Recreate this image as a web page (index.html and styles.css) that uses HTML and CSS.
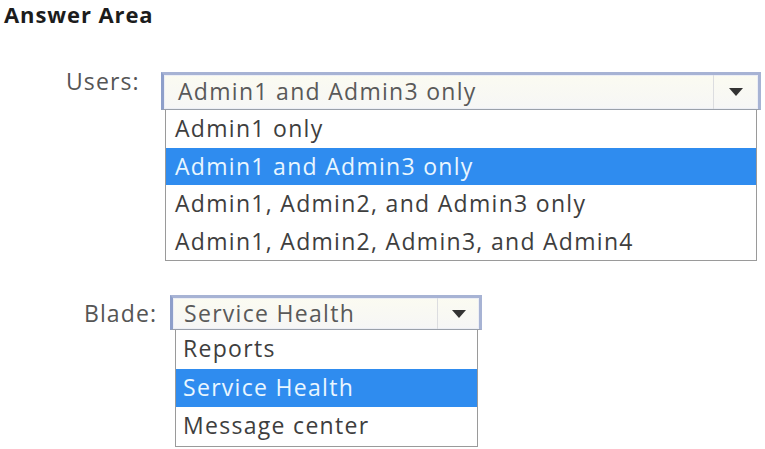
FILE: index.html
```html
<!DOCTYPE html>
<html>
<head>
<meta charset="utf-8">
<link rel="stylesheet" href="styles.css">
</head>
<body>
<div class="page">
  <h1 class="title">Answer Area</h1>
  <div class="row row-users">
    <div class="label">Users:</div>
    <div class="combo combo-users">
      <div class="current">
        <span class="value">Admin1 and Admin3 only</span>
        <span class="btn"><span class="arrow"></span></span>
      </div>
      <ul class="list">
        <li>Admin1 only</li>
        <li class="sel">Admin1 and Admin3 only</li>
        <li>Admin1, Admin2, and Admin3 only</li>
        <li>Admin1, Admin2, Admin3, and Admin4</li>
      </ul>
    </div>
  </div>
  <div class="row row-blade">
    <div class="label">Blade:</div>
    <div class="combo combo-blade">
      <div class="current">
        <span class="value">Service Health</span>
        <span class="btn"><span class="arrow"></span></span>
      </div>
      <ul class="list">
        <li>Reports</li>
        <li class="sel">Service Health</li>
        <li>Message center</li>
      </ul>
    </div>
  </div>
</div>
</body>
</html>
```

FILE: styles.css
```css
* { box-sizing: border-box; }
html, body { margin: 0; padding: 0; background: #fff; }
body {
  font-family: "Open Sans", "Noto Sans", sans-serif;
  color: #454545;
  width: 765px;
  height: 449px;
  overflow: hidden;
}
.page { padding: 0; }
.title {
  margin: 0;
  padding: 0 0 0 4px;
  height: 28px;
  line-height: 28px;
  font-size: 22px;
  font-weight: 700;
  letter-spacing: 0.9px;
  color: #1c1c1c;
}
.row { display: flex; align-items: flex-start; }
.label {
  font-size: 23px;
  letter-spacing: 1.1px;
  line-height: 30px;
  color: #555;
  white-space: nowrap;
}
.row-users { margin-top: 44px; }
.row-users .label { margin-left: 66px; margin-top: -6px; width: 95px; }
.row-blade { margin-top: 34px; }
.row-blade .label { margin-left: 84px; margin-top: 3px; width: 86px; }

.combo { display: flex; flex-direction: column; }
.combo-users { width: 600px; }
.combo-blade { width: 312px; }

.current {
  display: flex;
  align-items: stretch;
  border: 3px solid #a7b3d4;
  border-left-color: #8e9fca;
  border-bottom: 1px solid #9aa0aa;
  background: linear-gradient(#fbfbf1, #f6f6f6);
  box-shadow: inset 0 0 0 1px #eceef5;
}
.combo-users .current { height: 38px; }
.combo-blade .current { height: 35px; }
.value {
  flex: 1;
  font-size: 23px;
  letter-spacing: 1.3px;
  line-height: 32px;
  padding-left: 14px;
  color: #595959;
  white-space: nowrap;
}
.combo-blade .value { padding-left: 11px; line-height: 30px; }
.btn {
  width: 45px;
  border-left: 1px solid #dcdde0;
  display: flex;
  align-items: center;
  justify-content: center;
}
.combo-blade .btn { width: 42px; }
.arrow {
  width: 0; height: 0;
  border-left: 7px solid transparent;
  border-right: 7px solid transparent;
  border-top: 8px solid #333;
}

.list {
  list-style: none;
  margin: 0 4px;
  padding: 0;
  border: 1px solid #9a9a9a;
  border-top: none;
  background: #fff;
}
.list li {
  height: 37.5px;
  line-height: 36px;
  font-size: 23px;
  letter-spacing: 1.3px;
  padding-left: 9px;
  color: #3e3e3e;
  white-space: nowrap;
}
.combo-blade .list { margin: 0 4px 0 5px; }
.combo-blade .list li { height: 38.5px; padding-left: 7px; }
.list li.sel {
  background: #2f8cef;
  color: #e9f6ff;
}
```
